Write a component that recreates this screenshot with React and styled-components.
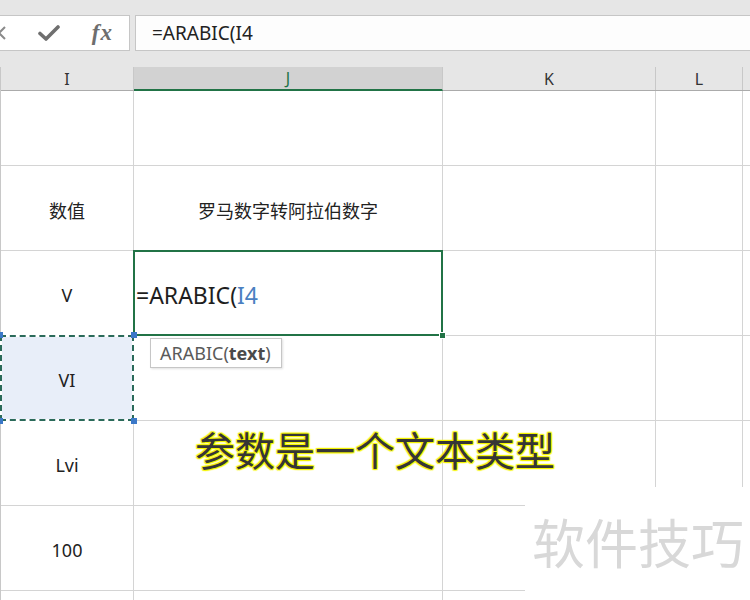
import React from 'react';
import styled, { createGlobalStyle, css } from 'styled-components';

const GlobalStyle = createGlobalStyle`
  html, body {
    margin: 0;
    padding: 0;
    background: #ffffff;
    overflow: hidden;
  }
  body {
    font-family: "Noto Sans", "Noto Sans CJK SC", sans-serif;
  }
`;

const kGreen = '#217346';
const kGrid = '#d4d4d4';
const kCols = [133, 309, 213, 87, 20];

const Screen = styled.div`
  position: relative;
  width: 750px;
  height: 600px;
  overflow: hidden;
  background: #e6e6e6;
  padding-top: 15px;
  box-sizing: border-box;
`;

const FormulaBar = styled.div`
  height: 36px;
  display: flex;
  gap: 5px;
`;

const ButtonBox = styled.div`
  width: 160px;
  margin-left: -30px;
  flex: none;
  background: #ffffff;
  border: 1px solid #c6c6c6;
  box-sizing: border-box;
  display: flex;
  align-items: center;
  justify-content: space-between;
  padding: 0 16px 0 20px;
  color: #6a6a6a;
`;

const FxLabel = styled.span`
  font-family: "Liberation Serif", "DejaVu Serif", serif;
  font-style: italic;
  font-weight: 700;
  font-size: 23px;
  color: #6e6e6e;
  letter-spacing: 1px;
`;

const FormulaInput = styled.div`
  flex: 1;
  background: #fdfdfd;
  border: 1px solid #c6c6c6;
  border-right: none;
  box-sizing: border-box;
  display: flex;
  align-items: center;
  padding-left: 16px;
  font-size: 19px;
  color: #222222;
`;

const Gap = styled.div`
  height: 16px;
`;

const Sheet = styled.div`
  background: #ffffff;
  border-left: 1px solid #c8c8c8;
`;

const HeaderRow = styled.div`
  display: flex;
  height: 23px;
  background: #e6e6e6;
  border-bottom: 1px solid #ababab;
`;

const HeaderCell = styled.div`
  flex: none;
  width: ${(p) => p.$w}px;
  box-sizing: border-box;
  border-right: 1px solid #c8c8c8;
  display: flex;
  align-items: center;
  justify-content: center;
  font-size: 16px;
  color: #333333;
  ${(p) =>
    p.$selected &&
    css`
      background: #d2d2d2;
      color: ${kGreen};
      border-bottom: 2px solid ${kGreen};
      margin-bottom: -1px;
    `}
`;

const Row = styled.div`
  display: flex;
  height: ${(p) => p.$h}px;
`;

const Cell = styled.div`
  position: relative;
  flex: none;
  width: ${(p) => p.$w}px;
  box-sizing: border-box;
  border-right: 1px solid ${kGrid};
  border-bottom: 1px solid ${kGrid};
  display: flex;
  align-items: center;
  justify-content: center;
  font-size: 18px;
  color: #222222;
  padding-top: 3px;

  ${(p) =>
    p.$active &&
    css`
      justify-content: flex-start;
      font-size: 23px;
      padding-left: 2px;
      color: #1e1e1e;
      &::after {
        content: '';
        position: absolute;
        left: -1px;
        top: -1px;
        right: -1px;
        bottom: -1px;
        border: 2px solid ${kGreen};
      }
    `}

  ${(p) =>
    p.$marked &&
    css`
      background: #e8eef9;
      &::before,
      &::after {
        content: '';
        position: absolute;
        left: -1px;
        top: -1px;
        right: -1px;
        bottom: -1px;
      }
      &::before {
        border: 2px solid #ffffff;
      }
      &::after {
        border: 2px dashed #2b6a5a;
      }
    `}
`;

const RefText = styled.span`
  color: #4a7fc1;
`;

const FillHandle = styled.span`
  position: absolute;
  right: -4px;
  bottom: -4px;
  width: 5px;
  height: 5px;
  background: ${kGreen};
  border: 1px solid #ffffff;
  z-index: 2;
`;

const Corner = styled.span`
  position: absolute;
  width: 6px;
  height: 6px;
  background: #3b78c8;
  z-index: 2;
  ${(p) => (p.$top ? 'top: -4px;' : 'bottom: -4px;')}
  ${(p) => (p.$left ? 'left: -4px;' : 'right: -4px;')}
`;

const Tooltip = styled.div`
  position: absolute;
  left: 150px;
  top: 338px;
  height: 30px;
  padding: 0 10px 0 9px;
  box-sizing: border-box;
  background: #ffffff;
  border: 1px solid #c6c6c6;
  box-shadow: 1px 1px 2px rgba(0, 0, 0, 0.12);
  display: flex;
  align-items: center;
  font-size: 18px;
  color: #5a5a5a;
  b {
    font-weight: 700;
    color: #4a4a4a;
  }
`;

const Caption = styled.div`
  position: absolute;
  left: 195px;
  top: 425px;
  font-family: "Noto Sans CJK SC", sans-serif;
  font-size: 40px;
  line-height: 48px;
  font-weight: 400;
  color: #363636;
  white-space: nowrap;
  text-shadow: 1px 1px 1px #f4f400, -1px -1px 1px #f4f400, 1px -1px 1px #f4f400,
    -1px 1px 1px #f4f400, 0 0 2px #ffff40;
`;

const Watermark = styled.div`
  position: absolute;
  left: 525px;
  top: 487px;
  right: 0;
  bottom: 0;
  background: #ffffff;
  display: flex;
  align-items: flex-start;
  padding: 24px 0 0 7px;
  box-sizing: border-box;
  font-family: "Noto Sans CJK SC", sans-serif;
  font-size: 53px;
  line-height: 60px;
  font-weight: 400;
  color: #d8d8d8;
  white-space: nowrap;
`;

const CheckIcon = () => (
  <svg width="22" height="18" viewBox="0 0 22 18">
    <path d="M2 9.5 L8 15 L20 3" fill="none" stroke="#6f6f6f" strokeWidth="3.6" strokeLinecap="round" strokeLinejoin="round" />
  </svg>
);

const CrossIcon = () => (
  <svg width="16" height="16" viewBox="0 0 16 16">
    <path d="M2 2 L14 14 M14 2 L2 14" fill="none" stroke="#8a8a8a" strokeWidth="2" />
  </svg>
);

const headers = ['I', 'J', 'K', 'L', ''];

const rows = [
  { h: 75, cells: ['', '', '', '', ''] },
  { h: 85, cells: ['数值', '罗马数字转阿拉伯数字', '', '', ''] },
  { h: 85, cells: ['V', 'formula', '', '', ''] },
  { h: 85, cells: ['VI', '', '', '', ''] },
  { h: 85, cells: ['Lvi', '', '', '', ''] },
  { h: 85, cells: ['100', '', '', '', ''] },
  { h: 85, cells: ['', '', '', '', ''] }
];

const App = () => (
  <>
    <GlobalStyle />
    <Screen>
      <FormulaBar>
        <ButtonBox>
          <CrossIcon />
          <CheckIcon />
          <FxLabel>fx</FxLabel>
        </ButtonBox>
        <FormulaInput>=ARABIC(I4</FormulaInput>
      </FormulaBar>
      <Gap />
      <Sheet>
        <HeaderRow>
          {headers.map((h, i) => (
            <HeaderCell key={i} $w={kCols[i]} $selected={h === 'J'}>
              {h}
            </HeaderCell>
          ))}
        </HeaderRow>
        {rows.map((row, r) => (
          <Row key={r} $h={row.h}>
            {row.cells.map((c, i) => {
              const active = c === 'formula';
              const marked = r === 3 && i === 0;
              return (
                <Cell key={i} $w={kCols[i]} $active={active} $marked={marked}>
                  {active ? (
                    <>
                      =ARABIC(<RefText>I4</RefText>
                      <FillHandle />
                    </>
                  ) : (
                    c
                  )}
                  {marked && (
                    <>
                      <Corner $top $left />
                      <Corner $top />
                      <Corner $left />
                      <Corner />
                    </>
                  )}
                </Cell>
              );
            })}
          </Row>
        ))}
      </Sheet>
      <Tooltip>
        ARABIC(<b>text</b>)
      </Tooltip>
      <Caption>参数是一个文本类型</Caption>
      <Watermark>软件技巧</Watermark>
    </Screen>
  </>
);

export default App;
